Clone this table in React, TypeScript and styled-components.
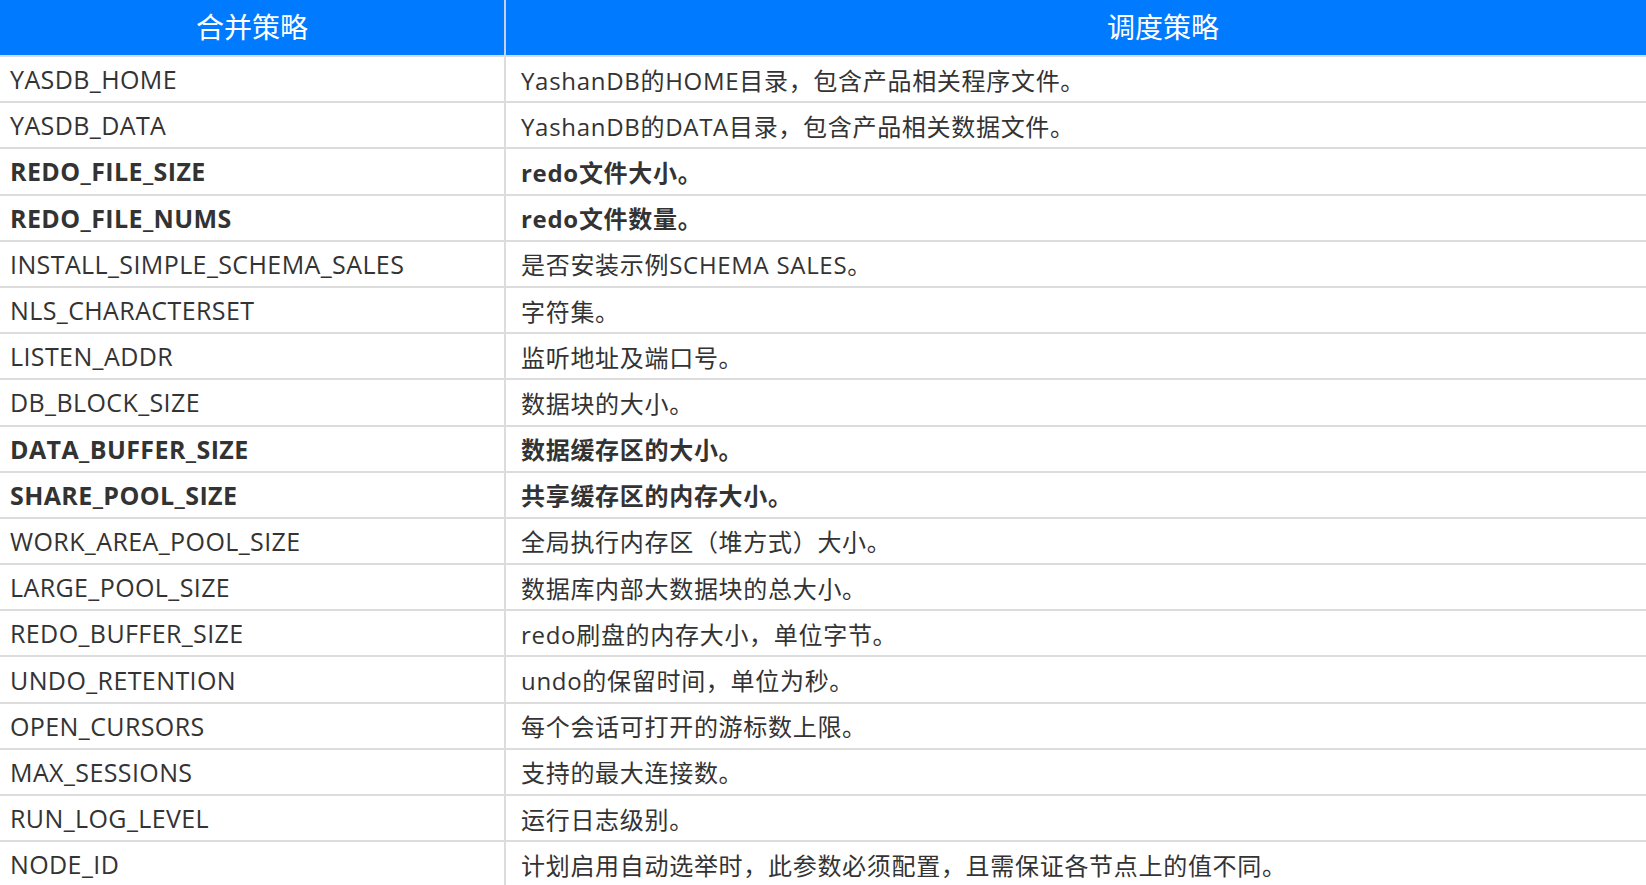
import React from "react";
import styled, { createGlobalStyle } from "styled-components";

const Global = createGlobalStyle`
  html, body { margin: 0; padding: 0; background: #ffffff; overflow: hidden; }
  body { font-family: "Open Sans", "Noto Sans CJK SC", sans-serif; }
`;

const Table = styled.div`
  width: 1820px;
  display: flex;
  flex-direction: column;
  color: #333333;
`;

const HeaderRow = styled.div`
  display: grid;
  grid-template-columns: 504px 1fr;
  height: 57px;
  background: #007bff;
  border-bottom: 2px solid #d3dbe6;
  box-sizing: border-box;
`;

const HeaderCell = styled.div<{ $divider?: boolean }>`
  display: flex;
  align-items: center;
  justify-content: center;
  padding-bottom: 3px;
  color: #ffffff;
  font-size: 28px;
  font-family: "Noto Sans CJK SC", sans-serif;
  border-left: ${(p) => (p.$divider ? "2px solid #c5d0de" : "none")};
`;

const Row = styled.div`
  display: grid;
  grid-template-columns: 504px 1fr;
  height: 46.2px;
  border-bottom: 2px solid #dcdcdc;
  box-sizing: border-box;
`;

const NameCell = styled.div<{ $bold?: boolean }>`
  display: flex;
  align-items: center;
  padding-left: 10px;
  font-size: 25px;
  letter-spacing: 0.4px;
  font-weight: ${(p) => (p.$bold ? 700 : 400)};
  white-space: nowrap;
`;

const DescCell = styled.div<{ $bold?: boolean }>`
  display: flex;
  align-items: center;
  padding-left: 15px;
  font-size: 24px;
  letter-spacing: 0.7px;
  font-weight: ${(p) => (p.$bold ? 700 : 400)};
  white-space: nowrap;
  border-left: 2px solid #dcdcdc;
`;

const rows: { name: string; desc: string; bold?: boolean }[] = [
  { name: "YASDB_HOME", desc: "YashanDB的HOME目录，包含产品相关程序文件。" },
  { name: "YASDB_DATA", desc: "YashanDB的DATA目录，包含产品相关数据文件。" },
  { name: "REDO_FILE_SIZE", desc: "redo文件大小。", bold: true },
  { name: "REDO_FILE_NUMS", desc: "redo文件数量。", bold: true },
  { name: "INSTALL_SIMPLE_SCHEMA_SALES", desc: "是否安装示例SCHEMA SALES。" },
  { name: "NLS_CHARACTERSET", desc: "字符集。" },
  { name: "LISTEN_ADDR", desc: "监听地址及端口号。" },
  { name: "DB_BLOCK_SIZE", desc: "数据块的大小。" },
  { name: "DATA_BUFFER_SIZE", desc: "数据缓存区的大小。", bold: true },
  { name: "SHARE_POOL_SIZE", desc: "共享缓存区的内存大小。", bold: true },
  { name: "WORK_AREA_POOL_SIZE", desc: "全局执行内存区（堆方式）大小。" },
  { name: "LARGE_POOL_SIZE", desc: "数据库内部大数据块的总大小。" },
  { name: "REDO_BUFFER_SIZE", desc: "redo刷盘的内存大小，单位字节。" },
  { name: "UNDO_RETENTION", desc: "undo的保留时间，单位为秒。" },
  { name: "OPEN_CURSORS", desc: "每个会话可打开的游标数上限。" },
  { name: "MAX_SESSIONS", desc: "支持的最大连接数。" },
  { name: "RUN_LOG_LEVEL", desc: "运行日志级别。" },
  { name: "NODE_ID", desc: "计划启用自动选举时，此参数必须配置，且需保证各节点上的值不同。" },
];

export default function App() {
  return (
    <>
      <Global />
      <Table>
        <HeaderRow>
          <HeaderCell>合并策略</HeaderCell>
          <HeaderCell $divider>调度策略</HeaderCell>
        </HeaderRow>
        {rows.map((r) => (
          <Row key={r.name}>
            <NameCell $bold={r.bold}>{r.name}</NameCell>
            <DescCell $bold={r.bold}>{r.desc}</DescCell>
          </Row>
        ))}
      </Table>
    </>
  );
}
